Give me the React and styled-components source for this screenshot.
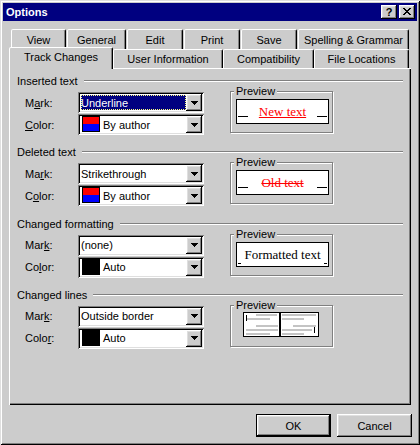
import React from "react";
import styled, { createGlobalStyle } from "styled-components";

const FACE = "#cccccc";

const GlobalStyle = createGlobalStyle`
  html, body {
    margin: 0;
    padding: 0;
    background: ${FACE};
  }
  body {
    font-family: "Liberation Sans", Arial, sans-serif;
    font-size: 11px;
    color: #000;
  }
`;

const raised = `
  box-shadow: inset -1px -1px #000, inset 1px 1px #fff,
    inset -2px -2px #808080, inset 2px 2px #dfdfdf;
`;

const Window = styled.div`
  width: 420px;
  height: 445px;
  box-sizing: border-box;
  padding: 3px;
  background: ${FACE};
  box-shadow: inset 1px 1px #dfdfdf, inset -1px -1px #000,
    inset 2px 2px #fff, inset -2px -2px #808080;
  display: flex;
  flex-direction: column;
`;

const TitleBar = styled.div`
  height: 18px;
  background: #000080;
  color: #fff;
  display: flex;
  align-items: center;
  padding: 0 2px 0 3px;
`;

const TitleText = styled.div`
  flex: 1;
  font-weight: bold;
  line-height: 14px;
`;

const CaptionButtons = styled.div`
  display: flex;
  gap: 2px;
`;

const CaptionButton = styled.div`
  width: 16px;
  height: 14px;
  box-sizing: border-box;
  background: ${FACE};
  ${raised}
  display: flex;
  align-items: center;
  justify-content: center;
  color: #000;
  font-weight: bold;
  font-size: 11px;
  line-height: 12px;
  padding: 0 0 1px 0;
`;

const TabStrip = styled.div`
  margin: 8px 0 0 8px;
`;

const TabRow = styled.div`
  display: flex;
  align-items: flex-start;
  gap: ${(p) => (p.$back ? 1 : 0)}px;
  height: ${(p) => (p.$back ? 20 : 21)}px;
  margin-top: ${(p) => (p.$back ? 0 : -2)}px;
`;

const Tab = styled.div`
  width: ${(p) => p.$width}px;
  height: ${(p) => (p.$back ? 20 : p.$selected ? 22 : 19)}px;
  margin-top: ${(p) => (p.$back || p.$selected ? 0 : 2)}px;
  margin-left: ${(p) => (p.$selected ? -2 : 0)}px;
  box-sizing: border-box;
  border: 1px solid;
  border-bottom: 0;
  border-color: #fff #000 transparent #fff;
  border-radius: 2px 2px 0 0;
  box-shadow: inset -1px 0 #808080;
  background: ${FACE};
  text-align: center;
  line-height: 14px;
  padding-top: ${(p) => (p.$back ? 3 : 2)}px;
  white-space: nowrap;
  position: ${(p) => (p.$selected ? "relative" : "static")};
  z-index: ${(p) => (p.$selected ? 1 : "auto")};
`;

const Panel = styled.div`
  margin-left: 6px;
  width: 402px;
  height: 337px;
  box-sizing: border-box;
  padding: 6px 8px 0 8px;
  box-shadow: inset 1px 1px #fff, inset -1px -1px #000,
    inset -2px -2px #808080;
`;

const Section = styled.div`
  height: 71.33px;
`;

const GroupHeader = styled.div`
  display: flex;
  align-items: center;
  height: 14px;
  line-height: 14px;
`;

const Rule = styled.div`
  flex: 1;
  margin-left: 6px;
  border-top: 1px solid #808080;
  border-bottom: 1px solid #fff;
`;

const GroupBody = styled.div`
  display: flex;
  align-items: flex-start;
  margin-top: 4px;
`;

const Fields = styled.div`
  margin-left: 8px;
  display: flex;
  flex-direction: column;
  gap: 1px;
`;

const FieldRow = styled.div`
  display: flex;
  align-items: center;
  height: 21px;
`;

const FieldLabel = styled.div`
  width: 53px;
  line-height: 14px;
`;

const Key = styled.span`
  text-decoration: underline;
  text-underline-offset: 1px;
`;

const Combo = styled.div`
  width: 126px;
  height: 21px;
  box-sizing: border-box;
  padding: 2px;
  background: #fff;
  box-shadow: inset 1px 1px #808080, inset -1px -1px #fff,
    inset 2px 2px #000, inset -2px -2px #dfdfdf;
  display: flex;
`;

const ComboValue = styled.div`
  flex: 1;
  min-width: 0;
  display: flex;
  align-items: flex-start;
`;

const ValueText = styled.div`
  flex: 1;
  align-self: stretch;
  display: flex;
  align-items: center;
  margin: ${(p) => (p.$focused ? "1px 0 1px 1px" : "0 0 0 1px")};
  line-height: 14px;
  white-space: nowrap;
  background: ${(p) => (p.$focused ? "#000080" : "transparent")};
  color: ${(p) => (p.$focused ? "#fff" : "#000")};
  outline: ${(p) => (p.$focused ? "1px dotted #ffff7f" : "none")};
  outline-offset: -1px;
`;

const Swatch = styled.div`
  width: 18px;
  height: 16px;
  flex-shrink: 0;
  box-sizing: border-box;
  border: 1px solid #000;
  margin: 0 2px 0 2px;
  background: ${(p) => p.$fill};
`;

const DropButton = styled.div`
  width: 16px;
  height: 17px;
  flex-shrink: 0;
  box-sizing: border-box;
  background: ${FACE};
  ${raised}
  display: flex;
  align-items: center;
  justify-content: center;
`;

const PreviewFrame = styled.div`
  position: relative;
  margin: -1px 0 0 26px;
  width: 103px;
  height: 42px;
  box-sizing: border-box;
  border: 1px solid #808080;
  box-shadow: inset 1px 1px #fff, 1px 1px #fff;
  padding: 7px 0 0 5px;
`;

const Legend = styled.div`
  position: absolute;
  top: -8px;
  left: 3px;
  padding: 0 2px;
  background: ${FACE};
  line-height: 14px;
`;

const SampleBox = styled.div`
  width: 93px;
  height: 25px;
  box-sizing: border-box;
  border: 1px solid #000;
  background: #fff;
  display: flex;
  align-items: center;
  justify-content: space-between;
  padding: 0 1px;
`;

const Blank = styled.span`
  width: ${(p) => p.$width}px;
  height: 1px;
  background: #000;
  align-self: flex-end;
  margin-bottom: ${(p) => p.$bottom}px;
  flex-shrink: 0;
`;

const SampleText = styled.span`
  font-family: "Liberation Serif", "Times New Roman", serif;
  font-size: 13px;
  line-height: 15px;
  white-space: nowrap;
  color: ${(p) => p.$color};
  text-decoration: ${(p) => p.$decoration};
  text-decoration-thickness: 1px;
`;

const PagesArt = styled.svg`
  display: block;
  margin: -1px 0 0 7px;
`;

const Footer = styled.div`
  display: flex;
  justify-content: flex-end;
  gap: 6px;
  margin-top: 9px;
  padding-right: 5px;
`;

const Button = styled.div`
  width: 75px;
  height: 23px;
  box-sizing: border-box;
  background: ${FACE};
  display: flex;
  align-items: center;
  justify-content: center;
  line-height: 14px;
  box-shadow: ${(p) =>
    p.$default
      ? "inset 0 0 0 1px #000, inset -2px -2px #000, inset 2px 2px #fff, inset -3px -3px #808080, inset 3px 3px #dfdfdf"
      : "inset -1px -1px #000, inset 1px 1px #fff, inset -2px -2px #808080, inset 2px 2px #dfdfdf"};
`;

const CloseGlyph = () => (
  <svg width="8" height="7" viewBox="0 0 8 7" shapeRendering="crispEdges">
    <path
      fill="#000"
      d="M0 0h2v1H0z M6 0h2v1H6z M1 1h2v1H1z M5 1h2v1H5z M2 2h4v1H2z M3 3h2v1H3z M2 4h4v1H2z M1 5h2v1H1z M5 5h2v1H5z M0 6h2v1H0z M6 6h2v1H6z"
    />
  </svg>
);

const ArrowGlyph = () => (
  <svg width="7" height="4" viewBox="0 0 7 4" shapeRendering="crispEdges">
    <path fill="#000" d="M0 0h7v1H0z M1 1h5v1H1z M2 2h3v1H2z M3 3h1v1H3z" />
  </svg>
);

const Accel = ({ parts }) => (
  <>
    {parts[0]}
    <Key>{parts[1]}</Key>
    {parts[2]}
  </>
);

const ComboBox = ({ value, focused, swatch }) => (
  <Combo>
    <ComboValue>
      {swatch && <Swatch $fill={swatch} />}
      <ValueText $focused={focused}>{value}</ValueText>
    </ComboValue>
    <DropButton>
      <ArrowGlyph />
    </DropButton>
  </Combo>
);

const linesLeft = [
  [13, 2, 21],
  [3, 6, 24],
  [13, 13, 22],
  [3, 17, 32],
  [3, 21, 24],
];

const linesRight = [
  [39, 2, 34],
  [39, 6, 22],
  [50, 13, 23],
  [39, 17, 30],
  [39, 21, 22],
];

const LinesPreview = () => (
  <PagesArt width="76" height="25" viewBox="0 0 76 25" shapeRendering="crispEdges">
    <rect x="0.5" y="0.5" width="36" height="24" fill="#fff" stroke="#000" />
    <rect x="37.5" y="0.5" width="38" height="24" fill="#fff" stroke="#000" />
    {[...linesLeft, ...linesRight].map(([x, y, w]) => (
      <rect key={`${x}-${y}`} x={x} y={y} width={w} height="2" fill="#c4c4c4" />
    ))}
    <rect x="3" y="3" width="1" height="6" fill="#000" />
    <rect x="71" y="15" width="1" height="6" fill="#000" />
  </PagesArt>
);

const Preview = ({ kind }) => {
  if (kind === "lines") return <LinesPreview />;
  const format = kind === "format";
  const blank = format ? { $width: 3, $bottom: 2 } : { $width: 10, $bottom: 6 };
  return (
    <SampleBox>
      <Blank {...blank} />
      {kind === "insert" && (
        <SampleText $color="#ff0000" $decoration="underline">
          New text
        </SampleText>
      )}
      {kind === "delete" && (
        <SampleText $color="#ff0000" $decoration="line-through">
          Old text
        </SampleText>
      )}
      {format && (
        <SampleText $color="#000" $decoration="none">
          Formatted text
        </SampleText>
      )}
      <Blank {...blank} />
    </SampleBox>
  );
};

const AUTHOR = "linear-gradient(#ff0000 50%, #0000ff 50%)";

const groups = [
  {
    title: "Inserted text",
    mark: ["M", "a", "rk:"],
    color: ["", "C", "olor:"],
    markValue: "Underline",
    focused: true,
    swatch: AUTHOR,
    colorValue: "By author",
    preview: "insert",
  },
  {
    title: "Deleted text",
    mark: ["Ma", "r", "k:"],
    color: ["C", "o", "lor:"],
    markValue: "Strikethrough",
    swatch: AUTHOR,
    colorValue: "By author",
    preview: "delete",
  },
  {
    title: "Changed formatting",
    mark: ["Mar", "k", ":"],
    color: ["Co", "l", "or:"],
    markValue: "(none)",
    swatch: "#000",
    colorValue: "Auto",
    preview: "format",
  },
  {
    title: "Changed lines",
    mark: ["Mar", "k", ":"],
    color: ["Colo", "r", ":"],
    markValue: "Outside border",
    swatch: "#000",
    colorValue: "Auto",
    preview: "lines",
  },
];

const backTabs = [
  ["View", 55],
  ["General", 59],
  ["Edit", 56],
  ["Print", 56],
  ["Save", 56],
  ["Spelling & Grammar", 111],
];

const frontTabs = [
  ["Track Changes", 104],
  ["User Information", 110],
  ["Compatibility", 91],
  ["File Locations", 95],
];

export default function App() {
  return (
    <>
      <GlobalStyle />
      <Window>
        <TitleBar>
          <TitleText>Options</TitleText>
          <CaptionButtons>
            <CaptionButton>?</CaptionButton>
            <CaptionButton>
              <CloseGlyph />
            </CaptionButton>
          </CaptionButtons>
        </TitleBar>

        <TabStrip>
          <TabRow $back>
            {backTabs.map(([label, width]) => (
              <Tab key={label} $back $width={width}>
                {label}
              </Tab>
            ))}
          </TabRow>
          <TabRow>
            {frontTabs.map(([label, width], i) => (
              <Tab key={label} $width={width} $selected={i === 0}>
                {label}
              </Tab>
            ))}
          </TabRow>
        </TabStrip>

        <Panel>
          {groups.map((g) => (
            <Section key={g.title}>
              <GroupHeader>
                {g.title}
                <Rule />
              </GroupHeader>
              <GroupBody>
                <Fields>
                  <FieldRow>
                    <FieldLabel>
                      <Accel parts={g.mark} />
                    </FieldLabel>
                    <ComboBox value={g.markValue} focused={g.focused} />
                  </FieldRow>
                  <FieldRow>
                    <FieldLabel>
                      <Accel parts={g.color} />
                    </FieldLabel>
                    <ComboBox value={g.colorValue} swatch={g.swatch} />
                  </FieldRow>
                </Fields>
                <PreviewFrame>
                  <Legend>Preview</Legend>
                  <Preview kind={g.preview} />
                </PreviewFrame>
              </GroupBody>
            </Section>
          ))}
        </Panel>

        <Footer>
          <Button $default>OK</Button>
          <Button>Cancel</Button>
        </Footer>
      </Window>
    </>
  );
}
